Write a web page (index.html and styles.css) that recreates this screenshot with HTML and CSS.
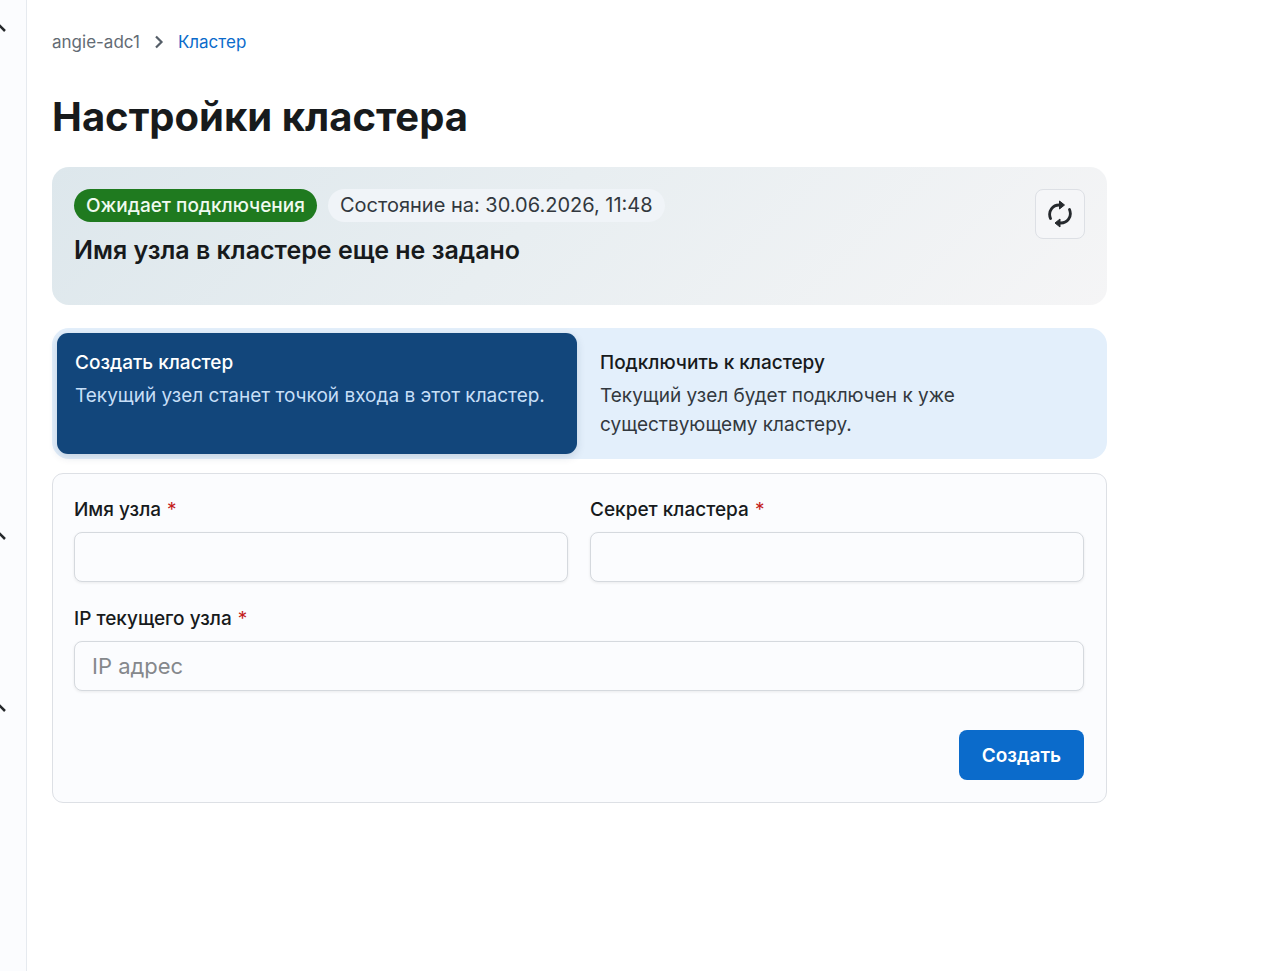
FILE: index.html
```html
<!DOCTYPE html>
<html lang="ru">
<head>
    <meta charset="UTF-8">
    <meta name="viewport" content="width=device-width, initial-scale=1.0">
    <title>Настройки кластера</title>
    <link rel="stylesheet" href="styles.css">
</head>
<body>
    <div class="layout">
        <aside class="sidebar">
            <div class="nav-group nav-group-main">
                <button type="button" class="nav-toggle" aria-label="Свернуть раздел">
                    <svg viewBox="0 0 20 20"><path d="M3 13l7-7 7 7"/></svg>
                </button>
            </div>
            <div class="nav-group nav-group-middle">
                <button type="button" class="nav-toggle" aria-label="Свернуть раздел">
                    <svg viewBox="0 0 20 20"><path d="M3 13l7-7 7 7"/></svg>
                </button>
            </div>
            <div class="nav-group">
                <button type="button" class="nav-toggle" aria-label="Свернуть раздел">
                    <svg viewBox="0 0 20 20"><path d="M3 13l7-7 7 7"/></svg>
                </button>
            </div>
        </aside>

        <main class="content">
            <nav class="breadcrumbs">
                <a href="#">angie-adc1</a>
                <svg viewBox="0 0 16 16"><path d="M5 2.500l5.500 5.500L5 13.500"/></svg>
                <a href="#" class="current">Кластер</a>
            </nav>

            <h1>Настройки кластера</h1>

            <section class="status-card">
                <div>
                    <div class="badges">
                        <span class="badge badge-green">Ожидает подключения</span>
                        <span class="badge badge-date">Состояние на: 30.06.2026, 11:48</span>
                    </div>
                    <h2>Имя узла в кластере еще не задано</h2>
                </div>
                <button type="button" class="refresh-btn" aria-label="Обновить">
                    <svg viewBox="0 0 24 28">
                        <path class="arc" d="M2.500 18.500C-0.500 11 5 4.800 11.500 5"/>
                        <path class="head" d="M11.500 1l5 4-5 4z"/>
                        <path class="arc" d="M21.500 9.500C24.500 17 19 23.200 12.500 23"/>
                        <path class="head" d="M12 27l-5-4 5-4z"/>
                    </svg>
                </button>
            </section>

            <div class="tabs" role="tablist">
                <button type="button" class="tab active" role="tab" aria-selected="true">
                    <span class="tab-title">Создать кластер</span>
                    <span class="tab-text">Текущий узел станет точкой входа в этот кластер.</span>
                </button>
                <button type="button" class="tab" role="tab" aria-selected="false">
                    <span class="tab-title">Подключить к кластеру</span>
                    <span class="tab-text">Текущий узел будет подключен к уже существующему кластеру.</span>
                </button>
            </div>

            <form class="cluster-form">
                <div class="field">
                    <label for="node-name">Имя узла <span class="required">*</span></label>
                    <input type="text" id="node-name">
                </div>
                <div class="field">
                    <label for="secret">Секрет кластера <span class="required">*</span></label>
                    <input type="password" id="secret">
                </div>
                <div class="field field-wide">
                    <label for="node-ip">IP текущего узла <span class="required">*</span></label>
                    <input type="text" id="node-ip" placeholder="IP адрес">
                </div>
                <div class="form-actions">
                    <button type="submit" class="submit-btn">Создать</button>
                </div>
            </form>
        </main>
    </div>
</body>
</html>
```
FILE: styles.css
```css
:root {
    --primary-color: #0b6bcb;
    --primary-dark: #12467b;
    --primary-light: #e3effb;
    --surface: #fbfcfe;
    --border: #dde0e5;
    --text: #171a1c;
    --text-secondary: #32383e;
}

* {
    box-sizing: border-box;
    margin: 0;
    padding: 0;
}

body {
    font-family: 'Inter', sans-serif;
    font-size: 19px;
    line-height: 29px;
    color: var(--text);
    background-color: #fff;
}

button,
input {
    font: inherit;
    color: inherit;
}

button {
    border: none;
    cursor: pointer;
}

.layout {
    display: flex;
    min-height: 100vh;
}

/* Sidebar */
.sidebar {
    flex: none;
    width: 27px;
    padding-top: 18px;
    background-color: var(--surface);
    border-right: 1px solid #e6eaef;
    overflow: hidden;
}

.nav-group-main {
    height: 508px;
}

.nav-group-middle {
    height: 172px;
}

.nav-toggle {
    display: block;
    width: 20px;
    height: 20px;
    margin-left: -12px;
    background: none;
}

.nav-toggle svg {
    display: block;
    fill: none;
    stroke: #25282b;
    stroke-width: 2.5;
}

/* Content */
.content {
    flex: 1;
    max-width: 1105px;
    padding: 30px 25px;
}

.breadcrumbs {
    display: flex;
    align-items: center;
    gap: 11px;
    font-size: 17px;
    line-height: 24px;
}

.breadcrumbs a {
    color: #636b74;
    text-decoration: none;
}

.breadcrumbs .current {
    color: var(--primary-color);
}

.breadcrumbs svg {
    width: 16px;
    height: 16px;
    fill: none;
    stroke: #555e68;
    stroke-width: 2.2;
}

h1 {
    margin: 35px 0 22px;
    font-size: 40px;
    line-height: 56px;
    font-weight: 700;
}

.status-card {
    display: flex;
    justify-content: space-between;
    align-items: flex-start;
    min-height: 138px;
    padding: 22px;
    border-radius: 17px;
    background: linear-gradient(135deg, #dde7ec 0%, #e8eef1 45%, #f5f5f6 100%);
}

.badges {
    display: flex;
    flex-wrap: wrap;
    gap: 11px;
}

.badge {
    padding: 0 12px;
    border-radius: 17px;
    line-height: 33px;
    color: var(--text-secondary);
    background-color: #f0f4f8;
}

.badge-green {
    font-weight: 500;
    color: #f0faf0;
    background-color: #1f7a1f;
}

.badge-date {
    font-size: 20px;
}

h2 {
    margin-top: 11px;
    font-size: 25px;
    line-height: 34px;
    font-weight: 600;
}

.refresh-btn {
    display: flex;
    justify-content: center;
    align-items: center;
    width: 50px;
    height: 50px;
    border: 1px solid var(--border);
    border-radius: 8px;
    background-color: #f5f6f8;
}

.refresh-btn svg {
    width: 24px;
    height: 28px;
}

.refresh-btn .arc {
    fill: none;
    stroke: #25292d;
    stroke-width: 2.8;
    stroke-linecap: round;
}

.refresh-btn .head {
    fill: #25292d;
    stroke: #25292d;
    stroke-linejoin: round;
}

/* Tabs */
.tabs {
    display: grid;
    grid-template-columns: 1fr 1fr;
    gap: 5px;
    margin-top: 23px;
    padding: 5px;
    border-radius: 17px;
    background-color: var(--primary-light);
}

.tab {
    display: flex;
    flex-direction: column;
    gap: 4px;
    padding: 15px 18px;
    border-radius: 11px;
    text-align: left;
    background: none;
}

.tab-title {
    font-weight: 500;
}

.tab-text {
    color: var(--text-secondary);
}

.tab.active {
    color: #fff;
    background-color: var(--primary-dark);
    box-shadow: 0 3px 8px rgba(21, 50, 80, 0.15);
}

.tab.active .tab-text {
    color: #c7dff7;
}

/* Form */
.cluster-form {
    display: grid;
    grid-template-columns: 1fr 1fr;
    gap: 23px 22px;
    margin-top: 14px;
    padding: 22px 22px 22px 21px;
    border: 1px solid var(--border);
    border-radius: 11px;
    background-color: var(--surface);
}

.field label {
    display: block;
    margin-bottom: 8px;
    line-height: 28px;
    font-weight: 500;
}

.required {
    margin-left: 1px;
    font-weight: 400;
    color: #c41c1c;
}

.field input {
    display: block;
    width: 100%;
    height: 50px;
    padding: 0 17px;
    border: 1px solid #d5d9de;
    border-radius: 8px;
    font-size: 22px;
    background-color: var(--surface);
    box-shadow: 0 1px 3px rgba(21, 21, 21, 0.08);
}

.field input::placeholder {
    color: #85888c;
    opacity: 1;
}

.field-wide,
.form-actions {
    grid-column: 1 / -1;
}

.form-actions {
    display: flex;
    justify-content: flex-end;
    padding-top: 16px;
}

.submit-btn {
    height: 50px;
    padding: 0 23px;
    border-radius: 8px;
    font-weight: 600;
    color: #fff;
    background-color: var(--primary-color);
}

@media (max-width: 700px) {
    .tabs,
    .cluster-form {
        grid-template-columns: 1fr;
    }
}
```
